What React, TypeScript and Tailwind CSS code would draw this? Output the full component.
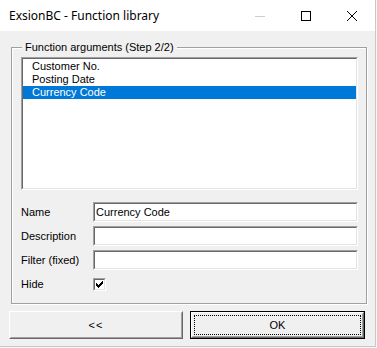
import React from "react";

const sunkenOuter =
  "border-t border-l border-b border-r border-t-[#a0a0a0] border-l-[#a0a0a0] border-b-white border-r-white";
const sunkenInner =
  "border-t border-l border-b border-r border-t-[#696969] border-l-[#696969] border-b-[#e3e3e3] border-r-[#e3e3e3]";

function TextBox({ value, className = "" }: { value?: string; className?: string }) {
  return (
    <div className={`${sunkenOuter} w-[265px] h-[20px] ${className}`}>
      <div className={`${sunkenInner} w-full h-full bg-white flex items-center pl-[1px] text-[11px] leading-[13px] text-black`}>
        {value}
      </div>
    </div>
  );
}

export default function App() {
  const items = ["Customer No.", "Posting Date", "Currency Code"];
  return (
    <div className="w-[377px] h-[348px] bg-[#f7f7f7] overflow-hidden" style={{ fontFamily: '"Liberation Sans", Arial, sans-serif' }}>
      <div className="w-[376px] h-[347px] bg-[#f0f0f0] border-r border-b border-[#c8c8c8] flex flex-col">
        {/* Title bar */}
        <div className="h-[31px] bg-white flex items-center shrink-0">
          <div className="pl-[9px] flex-1 text-[12px] text-black" style={{ fontFamily: '"Noto Sans", "Open Sans", sans-serif' }}>
            ExsionBC - Function library
          </div>
          <div className="w-[46px] h-[31px] flex items-center justify-center">
            <svg width="10" height="10" viewBox="0 0 10 10">
              <line x1="0" y1="5.5" x2="10" y2="5.5" stroke="#cccccc" strokeWidth="1" />
            </svg>
          </div>
          <div className="w-[46px] h-[31px] flex items-center justify-center">
            <svg width="10" height="10" viewBox="0 0 10 10">
              <rect x="0.5" y="0.5" width="9" height="9" fill="none" stroke="#000" strokeWidth="1" />
            </svg>
          </div>
          <div className="w-[46px] h-[31px] flex items-center justify-center">
            <svg width="10" height="10" viewBox="0 0 10 10">
              <path d="M0 0 L10 10 M10 0 L0 10" stroke="#000" strokeWidth="1" />
            </svg>
          </div>
        </div>

        {/* Group box */}
        <div className="relative ml-[11px] mt-[16px] w-[356px] h-[257px] border border-[#a0a0a0] shadow-[1px_1px_0_#fff,inset_1px_1px_0_#fff] pl-[9px] pt-[9px]">
          <span className="absolute left-[10px] top-[-8px] px-[3px] bg-[#f0f0f0] text-[11px] leading-[14px] text-black">
            Function arguments (Step 2/2)
          </span>
          {/* List box */}
          <div className={`${sunkenOuter} w-[337px] h-[133px]`}>
            <div className={`${sunkenInner} w-full h-full bg-white pt-[1px]`}>
              {items.map((it, i) => (
                <div
                  key={it}
                  className={`h-[13px] pl-[9px] text-[11px] leading-[13px] ${i === 2 ? "bg-[#0078d7] text-white" : "text-black"}`}
                >
                  {it}
                </div>
              ))}
            </div>
          </div>

          <div className="mt-[12px] flex flex-col gap-[4px]">
            <div className="flex items-center">
              <div className="w-[72px] text-[11px] leading-[13px] text-black">Name</div>
              <TextBox value="Currency Code" />
            </div>
            <div className="flex items-center">
              <div className="w-[72px] text-[11px] leading-[13px] text-black">Description</div>
              <TextBox />
            </div>
            <div className="flex items-center">
              <div className="w-[72px] text-[11px] leading-[13px] text-black">Filter (fixed)</div>
              <TextBox />
            </div>
            <div className="flex items-center mt-[4px]">
              <div className="w-[72px] text-[11px] leading-[13px] text-black">Hide</div>
              <div className="w-[13px] h-[13px] border border-t-[#a0a0a0] border-l-[#a0a0a0] border-b-white border-r-white">
                <div className="w-full h-full bg-white border border-t-[#696969] border-l-[#696969] border-b-[#e3e3e3] border-r-[#e3e3e3] flex items-center justify-center">
                  <svg width="7" height="7" viewBox="0 0 7 7" shapeRendering="crispEdges">
                    <path d="M0 2h1v3h-1z M1 3h1v3h-1z M2 4h1v3h-1z M3 3h1v3h-1z M4 2h1v3h-1z M5 1h1v3h-1z M6 0h1v3h-1z" fill="#000" />
                  </svg>
                </div>
              </div>
            </div>
          </div>
        </div>

        {/* Buttons */}
        <div className="mt-[7px] ml-[9px] flex gap-[7px]">
          <div className="w-[174px] h-[28px] border border-t-white border-l-white border-b-[#696969] border-r-[#696969]">
            <div className="w-full h-full border border-t-[#f0f0f0] border-l-[#f0f0f0] border-b-[#a0a0a0] border-r-[#a0a0a0] flex items-center justify-center text-[11px] tracking-[1px] text-black">
              &lt;&lt;
            </div>
          </div>
          <div className="w-[175px] h-[28px] border border-black">
            <div className="w-full h-full border border-t-white border-l-white border-b-[#696969] border-r-[#696969]">
              <div className="w-full h-full border border-t-[#f0f0f0] border-l-[#f0f0f0] border-b-[#a0a0a0] border-r-[#a0a0a0] p-[1px]">
                <div className="w-full h-full border border-dotted border-black flex items-center justify-center text-[11px] text-black">
                  OK
                </div>
              </div>
            </div>
          </div>
        </div>
      </div>
    </div>
  );
}
